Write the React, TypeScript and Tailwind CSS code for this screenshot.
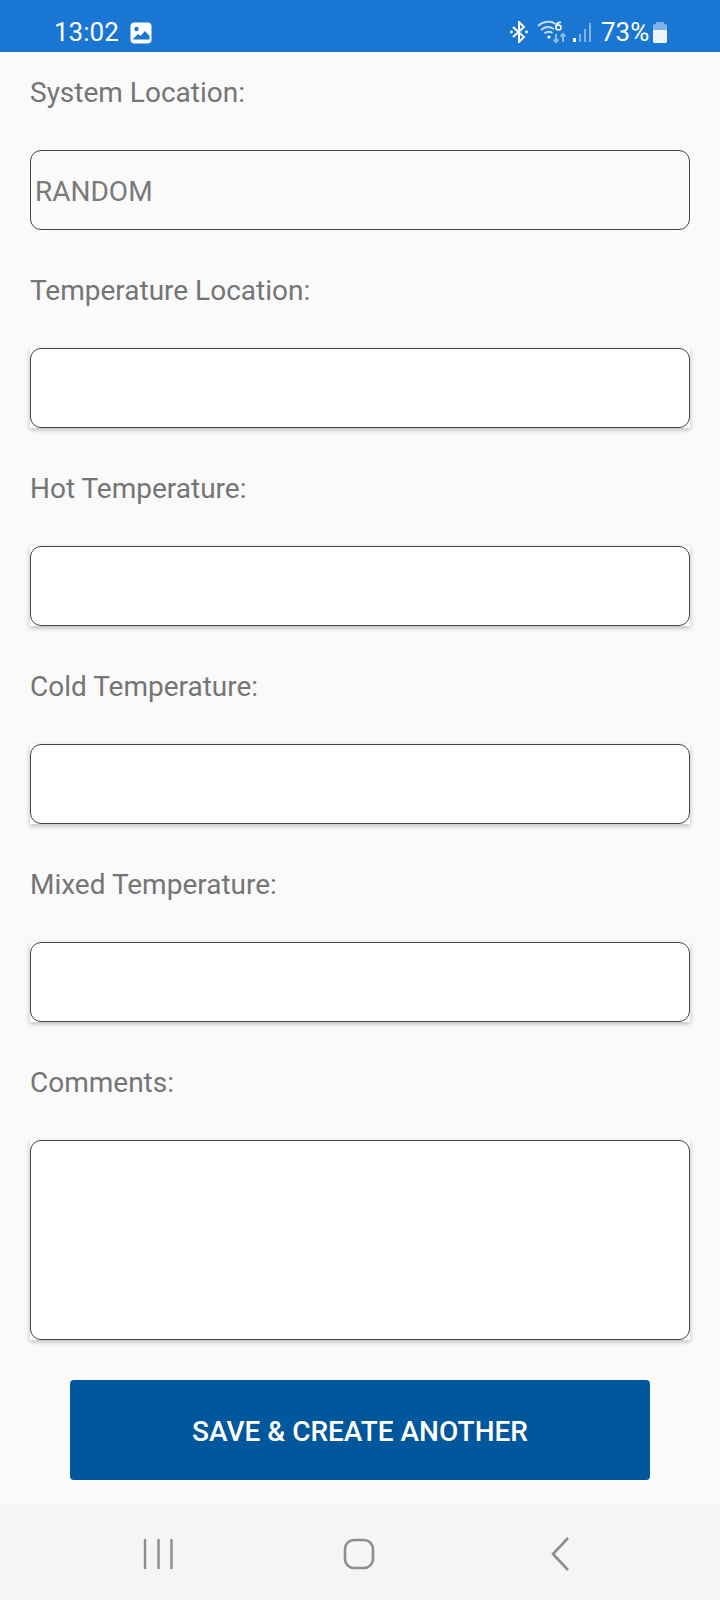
import React from "react";

function Field({ label, value, tall, muted }: { label: string; value?: string; tall?: boolean; muted?: boolean }) {
  return (
    <div className="flex flex-col">
      <div className="h-[98px] pt-[24px] pl-[30px] text-[28px] leading-[34px] text-[#757575]">{label}</div>
      <div className={`mx-[30px] w-[660px] ${tall ? "h-[200px]" : "h-[80px]"} ${muted ? "bg-[#fafafa]" : "bg-white shadow-[0_2px_5px_rgba(0,0,0,0.25)]"}`}>
        <div className="flex h-full items-center rounded-[11px] border border-[#444444] pt-[3px] pl-[4px] text-[28px] text-[#7a7a7a]">
          {value}
        </div>
      </div>
    </div>
  );
}

function Gap() {
  return <div className="h-[20px]" />;
}

export default function App() {
  return (
    <div className="flex h-[1600px] w-[720px] flex-col bg-[#fafafa] font-['Roboto',sans-serif]">
      <div className="flex h-[52px] items-center bg-[#1976d2] pt-[12px] pl-[54px] text-[26px] text-white">
        <span className="w-[76px] leading-[40px]">13:02</span>
        <svg width="22" height="22" viewBox="0 0 22 22" className="mt-[1px]">
          <rect width="21" height="21" x="0.5" y="0.5" rx="4" fill="#fff" />
          <circle cx="6.5" cy="7" r="2.2" fill="#1976d2" />
          <path d="M2.5 17.5 L8 12 L10.5 14 L15 9 L19.5 14 V17.5 Z" fill="#1976d2" />
        </svg>
        <svg width="18" height="22" viewBox="0 0 18 22" className="ml-[358px]" fill="none" stroke="#fff" strokeWidth="2">
          <path d="M3 6 L14 16 L9 21 V1 L14 6 L3 16" />
          <circle cx="1.5" cy="11" r="1.4" fill="#fff" stroke="none" />
          <circle cx="16.5" cy="11" r="1.4" fill="#fff" stroke="none" />
        </svg>
        <svg width="30" height="24" viewBox="0 0 30 24" className="ml-[9px]" fill="none" strokeWidth="2">
          <path d="M1 6 C6 1 14 0.5 18.5 4" stroke="#fff" opacity="0.75" />
          <path d="M4 10 C8 6.5 13 6.5 17 9" stroke="#fff" opacity="0.75" />
          <path d="M7.5 13.5 C10 11.5 13 11.5 15.5 13" stroke="#fff" opacity="0.75" />
          <circle cx="12" cy="17" r="1.6" fill="#fff" stroke="none" />
          <circle cx="21.5" cy="7.5" r="2.5" stroke="#fff" strokeWidth="1.6" />
          <path d="M19 7 C19 4 21 2 24 2.5" stroke="#fff" strokeWidth="1.6" />
          <path d="M19 14 V22 M16.5 19.5 L19 22 L21.5 19.5" stroke="#8fbbe9" />
          <path d="M26 22 V14 M23.5 16.5 L26 14 L28.5 16.5" stroke="#8fbbe9" />
        </svg>
        <svg width="20" height="22" viewBox="0 0 20 22" className="ml-[5px]" fill="#7fb2e6">
          <rect x="1" y="17" width="3" height="4" fill="#fff" />
          <rect x="7" y="13" width="2" height="8" />
          <rect x="12" y="8" width="2" height="13" />
          <rect x="17" y="2" width="2" height="19" />
        </svg>
        <span className="ml-[9px] w-[51px] leading-[40px]">73%</span>
        <svg width="14" height="21" viewBox="0 0 14 21" className="ml-[1px]">
          <path d="M4 0 H10 A1 1 0 0 1 11 1 V2 H12.5 A1.5 1.5 0 0 1 14 3.5 V8 H0 V3.5 A1.5 1.5 0 0 1 1.5 2 H3 V1 A1 1 0 0 1 4 0 Z" fill="#7fb2e6" />
          <path d="M0 8 H14 V19.5 A1.5 1.5 0 0 1 12.5 21 H1.5 A1.5 1.5 0 0 1 0 19.5 Z" fill="#eef5fd" />
        </svg>
      </div>

      <Field label="System Location:" value="RANDOM" muted />
      <Gap />
      <Field label="Temperature Location:" />
      <Gap />
      <Field label="Hot Temperature:" />
      <Gap />
      <Field label="Cold Temperature:" />
      <Gap />
      <Field label="Mixed Temperature:" />
      <Gap />
      <Field label="Comments:" tall />

      <button className="mx-[70px] mt-[40px] h-[100px] w-[580px] rounded-[4px] bg-[#01579b] pt-[3px] text-[28px] font-medium text-white">
        SAVE &amp; CREATE ANOTHER
      </button>

      <div className="mt-[24px] flex h-[96px] items-start bg-[#f5f5f5] pt-[34px] pl-[143px]">
        <svg width="32" height="32" viewBox="0 0 32 32" stroke="#8e8e8e" strokeWidth="2.4" fill="none">
          <path d="M2 1 V31 M15.5 1 V31 M28.5 1 V31" />
        </svg>
        <svg width="32" height="32" viewBox="0 0 32 32" className="ml-[168px]" stroke="#8e8e8e" strokeWidth="2.6" fill="none">
          <rect x="2" y="2" width="28" height="28" rx="9" />
        </svg>
        <svg width="22" height="34" viewBox="0 0 22 34" className="ml-[174px] -mt-[1px]" stroke="#8e8e8e" strokeWidth="2.6" fill="none">
          <path d="M19 1 L4 17 L19 33" />
        </svg>
      </div>
    </div>
  );
}
